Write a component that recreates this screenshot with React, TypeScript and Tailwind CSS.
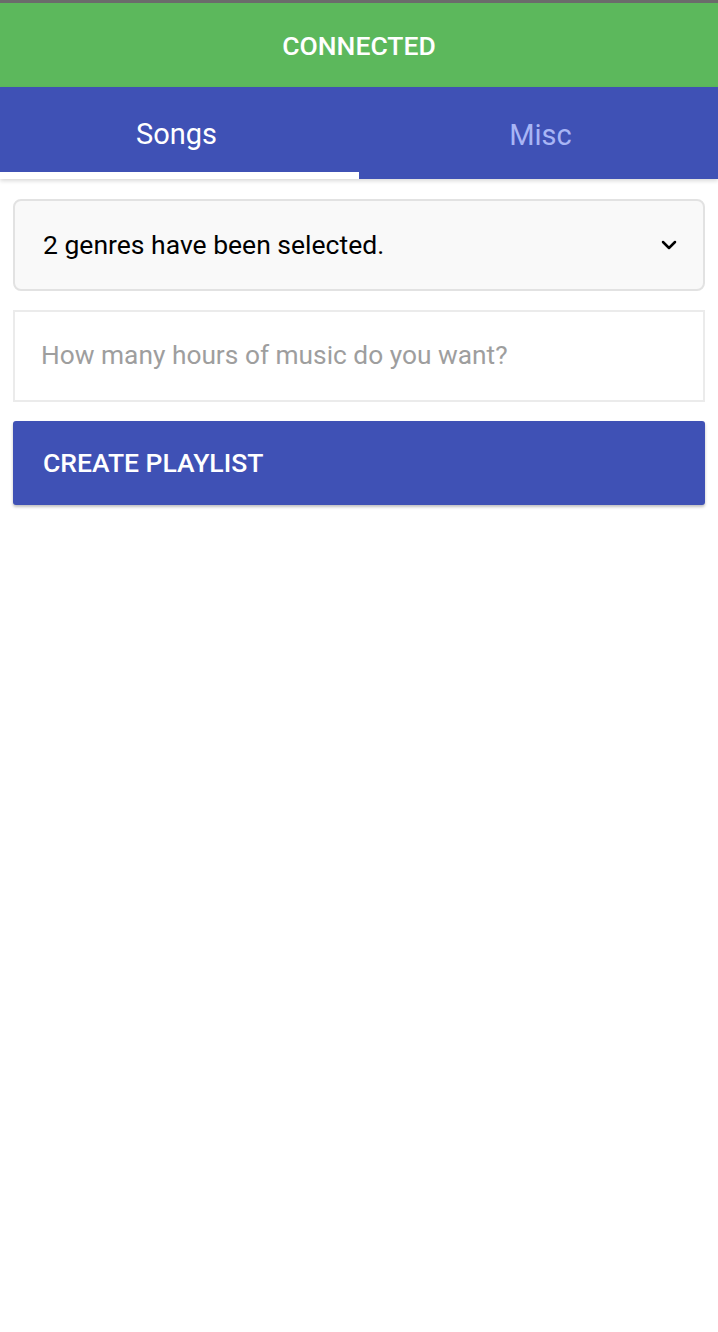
import { ChevronDown } from "lucide-react";

export default function App() {
    return (
        <div className="min-h-[1332px] bg-white font-['Roboto',sans-serif]">
            <div className="h-[3px] bg-[#6b6b6b]" />
            <div className="h-[84px] bg-[#5cb85c] flex items-center justify-center pt-[2px]">
                <span className="text-white text-[26.5px] font-medium">CONNECTED</span>
            </div>

            <div className="h-[92px] bg-[#3f51b5] flex shadow-[0_2px_4px_rgba(0,0,0,0.15)] relative">
                <div className="w-1/2 flex flex-col">
                    <div className="flex-1 flex items-center justify-center pt-[10px] pr-[6px]">
                        <span className="text-white text-[29px]">Songs</span>
                    </div>
                    <div className="h-[7px] bg-white" />
                </div>
                <div className="w-1/2 flex items-center justify-center pt-[5px] pl-[4px]">
                    <span className="text-[#a8b5f5] text-[29px]">Misc</span>
                </div>
            </div>

            <div className="px-[13px] pt-[20px] flex flex-col gap-[20px]">
                <div className="h-[92px] bg-[#f9f9f9] border-2 border-[#e2e2e2] rounded-[8px] flex items-center justify-between pl-[28px] pr-[22px]">
                    <span className="text-black text-[26.5px]">2 genres have been selected.</span>
                    <ChevronDown className="w-[24px] h-[24px] text-black" strokeWidth={2.5} />
                </div>

                <div className="h-[92px] bg-white border-2 border-[#ebebeb] flex items-center pl-[26px] -mt-[1px]">
                    <span className="text-[#9e9e9e] text-[26.3px]">How many hours of music do you want?</span>
                </div>

                <button className="h-[84px] -mt-[1px] bg-[#3f51b5] rounded-[3px] shadow-[0_2px_3px_rgba(0,0,0,0.25)] flex items-center pl-[30px]">
                    <span className="text-white text-[26.5px] font-medium">CREATE PLAYLIST</span>
                </button>
            </div>
        </div>
    );
}
